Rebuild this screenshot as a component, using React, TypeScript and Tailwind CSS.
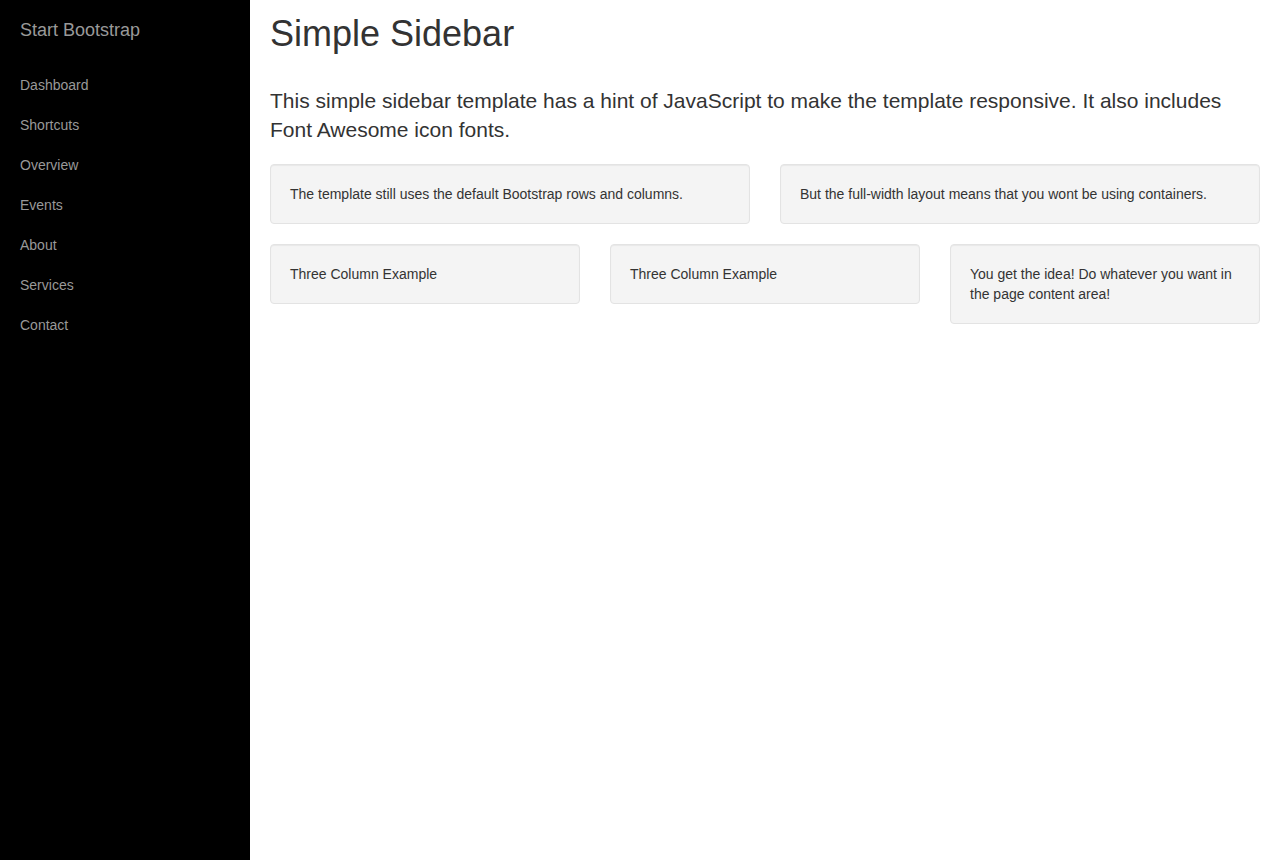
const navItems = ["Dashboard", "Shortcuts", "Overview", "Events", "About", "Services", "Contact"];

function Well({ children }: { children: React.ReactNode }) {
  return (
    <div className="min-h-[20px] p-[19px] rounded-[4px] border border-[#e3e3e3] bg-[#f4f4f4] shadow-[inset_0_1px_1px_rgba(0,0,0,0.05)] text-[14px] leading-[20px] text-[#333]">
      {children}
    </div>
  );
}

export default function App() {
  return (
    <div
      className="flex min-h-[860px] w-full bg-white"
      style={{ fontFamily: '"Liberation Sans", Arial, Helvetica, sans-serif' }}
    >
      <aside className="w-[250px] shrink-0 bg-black">
        <div className="h-[65px] pl-[20px] text-[18px] leading-[60px] text-[#999]">Start Bootstrap</div>
        <ul>
          {navItems.map((item) => (
            <li key={item} className="pl-[20px] text-[14px] leading-[40px] text-[#999]">
              {item}
            </li>
          ))}
        </ul>
      </aside>
      <main className="flex-1 px-[20px] pt-[14px] text-[#333]">
        <h1 className="text-[36px] leading-[1.1] font-normal">Simple Sidebar</h1>
        <p className="mt-[32px] mb-[20px] text-[21px] leading-[1.4] font-light">
          This simple sidebar template has a hint of JavaScript to make the template responsive. It also includes Font Awesome icon fonts.
        </p>
        <div className="grid grid-cols-2 gap-x-[30px] items-start">
          <Well>The template still uses the default Bootstrap rows and columns.</Well>
          <Well>But the full-width layout means that you wont be using containers.</Well>
        </div>
        <div className="mt-[20px] grid grid-cols-3 gap-x-[30px] items-start">
          <Well>Three Column Example</Well>
          <Well>Three Column Example</Well>
          <Well>You get the idea! Do whatever you want in the page content area!</Well>
        </div>
      </main>
    </div>
  );
}
